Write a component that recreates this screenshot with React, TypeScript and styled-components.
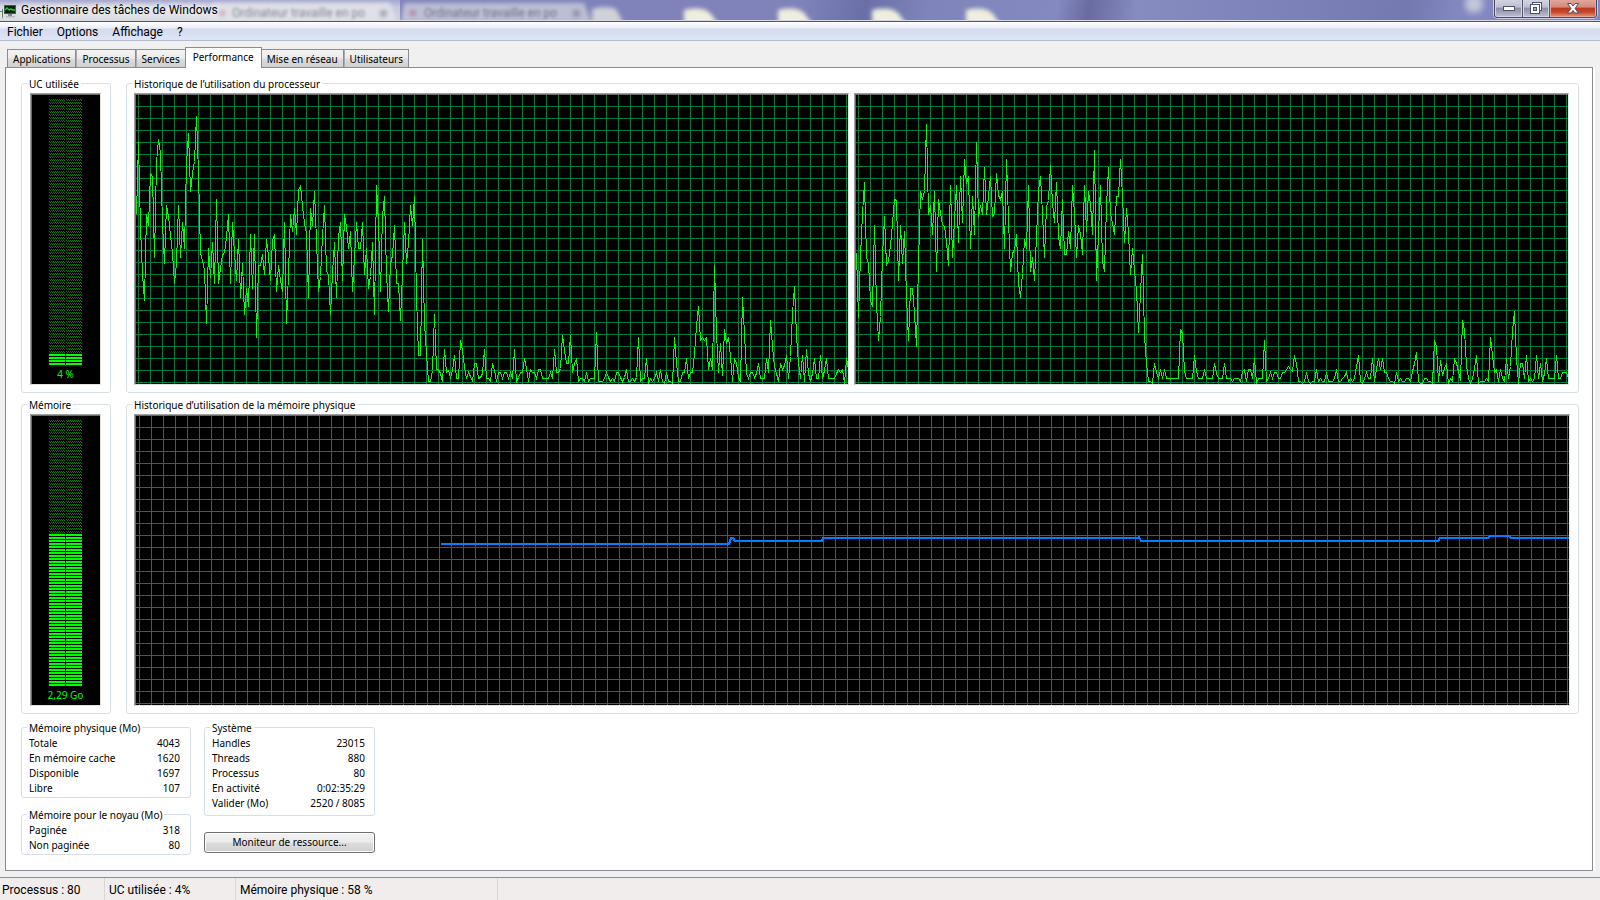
import React from "react";
import styled, { createGlobalStyle, css } from "styled-components";

const bodyFont = `"Noto Sans", Tahoma, sans-serif`;
const chromeFont = `Roboto, "Segoe UI", sans-serif`;

const GlobalStyle = createGlobalStyle`
  *, *::before, *::after { box-sizing: border-box; }
  body { margin: 0; background: #f0f0f0; color: #000; }
  button { color: inherit; font: inherit; }
`;

/* ---------- window frame ---------- */

const Window = styled.main`
  display: flex;
  flex-direction: column;
  min-height: 100vh;
  font: 10px/13px ${bodyFont};
`;

const TitleBar = styled.header`
  position: relative;
  display: flex;
  align-items: flex-start;
  justify-content: space-between;
  height: 22px;
  overflow: hidden;
  border-bottom: 1px solid #55566a;
  background: linear-gradient(100deg, #7f83ba 50%, #6a6fa8 54%, #7f84ba 58%, #8489c0 66%, #686ca0 68%, #868bc0 71%, #7d82b8 80%, #7479b0 88%, #8388c1 91%, #8388c2 100%);
`;

const Glass = styled.svg`
  position: absolute;
  inset: 0;
  width: 100%;
  height: 21px;
`;

const BackdropText = styled.text`
  font: 12px ${chromeFont};
`;

const Caption = styled.div`
  position: relative;
  display: flex;
  align-items: center;
  gap: 4px;
  height: 21px;
`;

const Title = styled.h1`
  margin: 0;
  font: 12px/21px ${chromeFont};
  text-shadow: 0 0 6px #fff, 0 0 10px #fff;
`;

const CaptionButtons = styled.div`
  position: relative;
  display: flex;
  height: 18px;
  margin-right: 3px;
  border: 1px solid #4a4a60;
  border-top: 0;
  border-radius: 0 0 4px 4px;
  box-shadow: 0 0 0 1px #c9cbe2;
  overflow: hidden;
`;

const CaptionButton = styled.button<{ $w: number; $close?: boolean }>`
  display: flex;
  align-items: center;
  justify-content: center;
  width: ${(p) => p.$w}px;
  height: 17px;
  padding: 0;
  border: 1px solid #d4d5e4;
  border-top: 0;
  background: ${(p) =>
    p.$close
      ? "linear-gradient(#e0a79c 0, #d6887b 45%, #bb3a22 50%, #c9452a 75%, #dd8a68 100%)"
      : "linear-gradient(#d3d4e2 0, #bcbdd0 45%, #8c8dac 50%, #a1a1bb 75%, #bcbcca 100%)"};
  & + & { box-shadow: -1px 0 0 #55566a; margin-left: 1px; }
  ${(p) => p.$close && css`border-color: #dfa69b;`}
`;

const MenuBar = styled.nav`
  display: flex;
  height: 19px;
  border-bottom: 1px solid #b4bdd0;
  background: linear-gradient(#fff 0, #e9edf6 6px, #d4dbed 7px, #dfe5f7 18px);
  font: 12px/16px ${chromeFont};
`;

const MenuItem = styled.button`
  height: 18px;
  padding: 2px 7px 0;
  border: 0;
  background: none;
`;

/* ---------- tabs ---------- */

const Body = styled.div`
  display: flex;
  flex: 1;
  flex-direction: column;
  padding: 6px 7px 6px 5px;
`;

const TabStrip = styled.div`
  display: flex;
  align-items: flex-end;
  height: 20px;
  padding-left: 2px;
`;

const Tab = styled.button<{ $on?: boolean }>`
  position: relative;
  height: 18px;
  padding: 0 5px;
  border: 1px solid #898c95;
  border-bottom: 0;
  background: linear-gradient(#f3f3f3 0, #ebebeb 48%, #dddddd 52%, #cfcfcf 100%);
  line-height: 18px;
  white-space: nowrap;
  & + & { border-left-color: #a9abb2; }
  ${(p) =>
    p.$on &&
    css`
      z-index: 1;
      height: 21px;
      margin: 0 -1px -1px;
      padding: 0 7px 3px;
      background: #fff;
      && { border-left-color: #898c95; }
    `}
`;

const Panel = styled.section`
  display: flex;
  flex: 1;
  flex-direction: column;
  padding: 9px 13px 15px 15px;
  border: 1px solid #898c95;
  background: #fff;
  box-shadow: 2px 0 0 #fff;
`;

/* ---------- group boxes ---------- */

const Group = styled.fieldset<{ $pad: string }>`
  display: flex;
  flex-direction: column;
  min-width: 0;
  margin: 0;
  padding: ${(p) => p.$pad};
  border: 1px solid #d5dfe5;
  border-radius: 3px;
`;

const Legend = styled.legend<{ $in?: number }>`
  height: 13px;
  margin-left: ${(p) => p.$in ?? -2}px;
  padding: 0 2px;
  line-height: 15px;
`;

const MonitorRow = styled.div`
  display: grid;
  grid-template-columns: 90px minmax(0, 1fr);
  flex: 1 1 0px;
  gap: 15px;
  min-height: 200px;
  & + & { margin-top: 5px; }
`;

const Screen = styled.div`
  border: 1px solid;
  border-color: #a0a0a0 #e3e3e3 #e3e3e3 #a0a0a0;
  background: #000;
  box-shadow: inset 1px 1px 0 #696969;
  padding: 1px 0 0 1px;
  min-width: 0;
  overflow: hidden;
`;

const MeterScreen = styled(Screen)`
  display: flex;
  flex: 1;
  flex-direction: column;
  align-items: center;
  padding-top: 5px;
  padding-right: 1px;
  color: #00ff00;
  line-height: 19px;
`;

const Segments = styled.div`
  display: flex;
  flex: 1;
  gap: 1px;
`;

const SegmentColumn = styled.div`
  display: flex;
  flex-direction: column;
  width: 16px;
`;

const DimPart = styled.svg`
  flex: 1 1 0;
  width: 16px;
  min-height: 0;
`;

const LitPart = styled.div<{ $count: number }>`
  height: ${(p) => p.$count * 3 - 1}px;
  background: repeating-linear-gradient(#00ff00 0 2px, #000 2px 3px);
`;

const GraphRow = styled.div<{ $cols: number }>`
  display: grid;
  grid-template-columns: repeat(${(p) => p.$cols}, minmax(0, 1fr));
  flex: 1;
  gap: 5px;
  padding-right: ${(p) => p.$cols - 1}px;
`;

const Plot = styled.svg<{ $start: number }>`
  display: block;
  width: 100%;
  height: 100%;
  background-image: linear-gradient(to right, #008040 1px, transparent 1px),
    linear-gradient(#008040 1px, transparent 1px);
  background-size: 12px 12px;
  background-position: ${(p) => p.$start}px 11px;
`;

const PlotFrame = styled(Screen)`
  position: relative;
  display: grid;
`;

const PlotHolder = styled.div`
  position: absolute;
  inset: 1px 0 0 1px;
  overflow: hidden;
`;

/* ---------- figures ---------- */

const Figures = styled.div`
  display: grid;
  grid-template-columns: 170px 171px;
  gap: 13px;
  margin-top: 7px;
`;

const FigureColumn = styled.div<{ $gap: number }>`
  display: flex;
  flex-direction: column;
  gap: ${(p) => p.$gap}px;
`;

const FigureTable = styled.table`
  width: 100%;
  border-collapse: collapse;
  line-height: 15px;
  th, td { padding: 0; font-weight: normal; text-align: left; white-space: nowrap; }
  td { text-align: right; }
`;

const PushButton = styled.button`
  height: 21px;
  padding: 0;
  border: 1px solid #707070;
  border-radius: 3px;
  background: linear-gradient(#f2f2f2 0, #ebebeb 48%, #dddddd 52%, #cfcfcf 100%);
  box-shadow: inset 0 0 0 1px #fcfcfc;
`;

const StatusBar = styled.footer`
  display: flex;
  height: 23px;
  border-top: 1px solid #8d8e8a;
  background: #f1edec;
  font: 12px/24px ${chromeFont};
`;

const StatusCell = styled.span<{ $w: number }>`
  width: ${(p) => p.$w}px;
  padding-left: 4px;
  border-right: 1px solid #d7d7d7;
  white-space: nowrap;
  &:first-child { padding-left: 2px; }
`;

/* ---------- data ---------- */

type Run = { dx: number; dy: number; points: string };

// Samples are stored in thirds of a pixel; dx and dy shift a run to the plot's origin.
const cpu0: Run[] = [
  {
    dx: -18,
    dy: -15,
    points: `19,373 25,157 31,416 37,552 43,632 49,373 55,407 61,250 67,258 73,502 79,218 85,148 91,190 97,400 103,520
109,346 115,380 121,435 127,490 133,580 139,520 145,346 151,502 157,397 163,475 169,220 175,130 181,304 187,250 193,213
199,79 205,250 211,490 217,510 223,540 229,700 235,475 241,562 247,458 253,580 259,328 265,580 271,535 277,493 283,490
289,440 295,374 301,580 307,397 313,490 319,570 325,448 331,622 337,520 343,673 349,595 355,649 361,433 367,595 373,433
379,742 385,527 391,525 397,493 403,553 409,448 415,500 421,570 427,450 433,433 439,604 445,526 451,570 457,604 463,397
469,700 475,550 481,374 487,424 493,355 499,433 505,301 511,286 517,350 523,400 529,430 535,622 541,355 547,407 553,304
559,450 565,604 571,560 577,440 583,346 589,540 595,556 601,673 607,550 613,458 619,622 625,440 631,397 637,570 643,374
649,410 655,475 661,424 667,604 673,500 679,397 685,475 691,475 697,397 703,553 709,475 715,595 721,560 727,458 733,673
739,286 745,400 751,604 757,375 763,319 769,550 775,664 781,520 787,495 793,406 799,580 805,580 811,691 817,550 823,397
829,520 835,460 841,346 847,407 853,319 859,620 865,796 871,796 877,448 883,700 889,790 895,874 901,874`,
  },
  {
    dx: 882,
    dy: 435,
    points: `7,390 13,222 19,388 25,388 31,400 37,424 43,328 49,397 55,390 61,412 67,390 73,346 79,415 85,415 91,300 97,330
103,380 109,415 115,397 121,410 127,424 133,370 139,370 145,415 151,412 157,400 163,328 169,415 175,415 181,424 187,370
193,390 199,424 205,397 211,397 217,415 223,397 229,397 235,415 241,397 247,415 253,328 259,424 265,412 271,397 277,397
283,355 289,385 295,424 301,388 307,397 313,397 319,415 325,388 331,388 337,415 343,415 349,415 355,415 361,397 367,415
373,328 379,397 385,397 391,385 397,286 403,330 409,370 415,370 421,286 427,397 433,370 439,355 445,424 451,415 457,415
463,424 469,397 475,424 481,415 487,415 493,415 499,277 505,424 511,424 517,424 523,415 529,397 535,412 541,424 547,415
553,424 559,397 565,397 571,412 577,424 583,412 589,388 595,424 601,424 607,415 613,424 619,412 625,292 631,424 637,415
643,415 649,355 655,430 661,415 667,424 673,415 679,397 685,424 691,388 697,424 703,430 709,397 715,424 721,424 727,430
733,292 739,370 745,424 751,424 757,397 763,397 769,355 775,415 781,397 787,397 793,340 799,260 805,199 811,300 817,292
823,300 829,292 835,388 841,355 847,388 853,75 859,280 865,397 871,310 877,406 883,268 889,310 895,292 901,350 907,424
913,355 919,370 925,412 931,424 937,172 943,280 949,400 955,415 961,397 967,397 973,412 979,400 985,370 991,415 997,415
1003,415 1009,355 1015,397 1021,241 1027,320 1033,380 1039,400 1045,424 1051,370 1057,388 1063,375 1069,346 1075,415
1081,350 1087,220 1093,139 1099,290 1105,370 1111,415 1117,346 1123,424 1129,328 1135,400 1141,424 1147,400 1153,355
1159,415 1165,415 1171,346 1177,415 1183,390 1189,355 1195,415 1201,415 1207,415 1213,415 1219,400 1225,388 1231,397
1237,388 1243,430 1249,355 1255,388`,
  },
];

const cpu1: Run[] = [
  {
    dx: -18,
    dy: -15,
    points: `19,490 25,682 31,500 37,370 43,277 49,502 55,520 61,630 67,649 73,406 79,640 85,751 91,680 97,500 103,379
109,526 115,510 121,465 127,400 133,328 139,330 145,571 151,406 157,520 163,424 169,620 175,751 181,595 187,595 193,670
199,769 205,520 211,304 217,328 223,300 229,103 235,373 241,346 247,433 253,304 259,544 265,328 271,370 277,403 283,410
289,455 295,526 301,286 307,502 313,390 319,286 325,457 331,259 337,397 343,208 349,280 355,259 361,475 367,319 373,433
379,157 385,379 391,346 397,373 403,232 409,373 415,320 421,259 427,379 433,370 439,250 445,315 451,328 457,304 463,475
469,208 475,390 481,544 487,490 493,478 499,433 505,580 511,622 517,550 523,448 529,475 535,286 541,544 547,502 553,571
559,440 565,300 571,259 577,370 583,502 589,350 595,330 601,226 607,340 613,397 619,277 625,440 631,475 637,328 643,493
649,493 655,424 661,475 667,286 673,370 679,502 685,406 691,430 697,493 703,286 709,424 715,304 721,340 727,433 733,181
739,571 745,430 751,286 757,515 763,544 769,350 775,232 781,370 787,400 793,433 799,319 805,319 811,208 817,320 823,457
829,355 835,430 841,553 847,475 853,540 859,600 865,727 871,610 877,493 883,740 889,820 895,874 901,874 907,880 913,820
919,848`,
  },
  {
    dx: 852,
    dy: 615,
    points: `55,235 61,208 67,235 73,208 79,235 115,235 121,87 127,100 133,215 139,235 157,235 163,166 169,215 175,235
187,235 193,208 199,235 217,235 223,190 229,220 235,235 247,235 253,190 259,235 271,235 277,244 283,235 295,235 301,244
307,215 313,208 319,244 325,208 331,208 337,235 343,175 349,250 355,235 367,235 373,121 379,244 385,235 391,217 397,235
403,217 409,217 415,235 421,235 427,217 433,217 439,208 445,199 451,208 457,215 463,166 469,190 475,244 481,244 487,250
493,244 499,217 505,244 511,250 517,244 523,244 529,208 535,244 541,235 547,244 553,244 559,217 565,244 577,244 583,235
589,208 595,244 601,244 607,235 613,230 619,217 625,244 631,235 637,244 643,235 649,200 655,166 661,244 667,250 673,235
679,217 685,235 691,235 697,175 703,244 709,205 715,175 721,208 727,175 733,217 739,217 745,235 751,244 757,244 763,250
769,217 775,244 781,235 787,244 793,244 799,235 805,235 811,244 817,215 823,190 829,157 835,244 841,250 847,250 853,235
859,235 865,244 871,244 877,250 883,121 889,140 895,244 901,181 907,225 913,205 919,190 925,250 931,235 937,244 943,175
949,190 955,215 961,240 967,61 973,90 979,195 985,235 991,250 997,235 1003,205 1009,166 1015,250 1021,244 1033,244
1039,235 1045,244 1051,112 1057,165 1063,217 1069,208 1075,244 1081,208 1087,235 1093,244 1099,175 1105,235 1111,200
1117,95 1123,34 1129,175 1135,250 1141,190 1147,190 1153,235 1159,166 1165,244 1171,235 1177,244 1183,235 1189,166
1195,235 1201,190 1207,244 1213,220 1219,175 1225,235 1243,235 1249,166 1255,235 1261,235 1267,217 1279,217 1285,235`,
  },
];

const memoryTrace =
  "305,128 593,128 595,122 597,122 599,125 686,125 687,122 1002,122 1003,121 1005,125 1302,125 1304,122 1352,122 1354,120 1373,120 1375,122 1800,122";

function toPolyline(runs: Run[]) {
  return runs
    .flatMap((run) =>
      run.points.split(/\s+/).map((pair) => {
        const [x, y] = pair.split(",").map(Number);
        return `${Math.floor((x + run.dx) / 3) + 0.5},${Math.floor((y + run.dy) / 3) + 0.5}`;
      })
    )
    .join(" ");
}

const physical = [["Totale", "4043"], ["En mémoire cache", "1620"], ["Disponible", "1697"], ["Libre", "107"]];
const kernel = [["Paginée", "318"], ["Non paginée", "80"]];
const system = [["Handles", "23015"], ["Threads", "880"], ["Processus", "80"], ["En activité", "0:02:35:29"], ["Valider (Mo)", "2520 / 8085"]];

/* ---------- parts ---------- */

function Meter({ id, lit, label }: { id: string; lit: number; label: string }) {
  return (
    <MeterScreen>
      <Segments>
        {[0, 1].map((column) => (
          <SegmentColumn key={column}>
            <DimPart aria-hidden="true">
              <defs>
                <pattern id={`${id}${column}`} width="2" height="3" patternUnits="userSpaceOnUse">
                  <rect width="1" height="1" fill="#008000" />
                  <rect x="1" y="1" width="1" height="1" fill="#008000" />
                </pattern>
              </defs>
              <rect width="16" height="100%" fill={`url(#${id}${column})`} />
            </DimPart>
            <LitPart $count={lit} />
          </SegmentColumn>
        ))}
      </Segments>
      {label}
    </MeterScreen>
  );
}

function Graph({ start, points, color, width }: { start: number; points: string; color: string; width: number }) {
  return (
    <PlotFrame>
      <PlotHolder>
        <Plot $start={start} aria-hidden="true">
          <polyline points={points} fill="none" stroke={color} strokeWidth={width} shapeRendering="crispEdges" />
        </Plot>
      </PlotHolder>
    </PlotFrame>
  );
}

function Table({ rows }: { rows: string[][] }) {
  return (
    <FigureTable>
      <tbody>
        {rows.map(([name, value]) => (
          <tr key={name}>
            <th scope="row">{name}</th>
            <td>{value}</td>
          </tr>
        ))}
      </tbody>
    </FigureTable>
  );
}

function Backdrop() {
  return (
    <Glass aria-hidden="true">
      <defs>
        <filter id="soft" x="-20%" y="-80%" width="140%" height="260%">
          <feGaussianBlur stdDeviation="3" />
        </filter>
        <filter id="softer" x="-20%" y="-80%" width="140%" height="260%">
          <feGaussianBlur stdDeviation="2" />
        </filter>
        <filter id="softText" x="-5%" y="-50%" width="110%" height="200%">
          <feGaussianBlur stdDeviation="1.6" />
        </filter>
        <linearGradient id="strip" x1="0" y1="0" x2="0" y2="1">
          <stop offset="0" stopColor="#a3a7cf" />
          <stop offset="0.35" stopColor="#c6c8dc" />
          <stop offset="1" stopColor="#d3d4df" />
        </linearGradient>
      </defs>
      <rect width="400" height="21" fill="url(#strip)" />
      <g filter="url(#softer)">
        <rect x="-10" y="5" width="216" height="20" fill="#dcdde3" />
        <path d="M205 24 L212 3 H390 L398 24 Z" fill="#dfe0e8" />
        <path d="M400 24 L404 3 H584 L592 24 Z" fill="#bcbfd4" />
        <circle cx="222" cy="13" r="3" fill="#d09aa2" />
        <circle cx="413" cy="13" r="3" fill="#b5788c" />
        <rect x="380" y="10" width="7" height="7" fill="#a3a4b0" />
        <rect x="573" y="10" width="7" height="7" fill="#8e90a6" />
        <path d="M592 24 V9 Q606 5 616 9 L624 24 Z" fill="#cfd2d6" />
      </g>
      <g filter="url(#softText)">
        <BackdropText x="232" y="17" fill="#85868f">Ordinateur travaille en po</BackdropText>
        <BackdropText x="424" y="17" fill="#6f7184">Ordinateur travaille en po</BackdropText>
      </g>
      <g filter="url(#softer)">
        {[684, 778, 872, 966].map((x) => (
          <path key={x} d={`M${x} 26 V10 Q${x + 18} 6 ${x + 26} 13 L${x + 36} 26 Z`} fill="#efefdf" />
        ))}
      </g>
      <svg x="100%" overflow="visible">
        <circle cx="-126" cy="4" r="9" fill="#c6c8da" filter="url(#soft)" />
      </svg>
      <rect y="20" width="100%" height="1" fill="#d5d6e6" />
    </Glass>
  );
}

function AppIcon() {
  return (
    <svg width="17" height="16" viewBox="0 0 17 16" aria-hidden="true">
      <path d="M0 6h2v9H0z" fill="#dfe6dc" />
      <path d="M0 8.5h2M2.5 6v9" stroke="#5f8a5a" />
      <path d="M4 2h12v9H4z" fill="#4b5552" />
      <path d="M5 3h10v7H5z" fill="#06200c" />
      <path d="M5 7l2-2 2 2 2-1 2 1h2" fill="none" stroke="#18d235" strokeWidth="1.4" />
      <path d="M8 11h4v2H8z" fill="#83898c" />
      <path d="M6 13h9v1.500H6z" fill="#b5bbbf" />
    </svg>
  );
}

export default function App() {
  return (
    <>
      <GlobalStyle />
      <Window>
        <TitleBar>
          <Backdrop />
          <Caption>
            <AppIcon />
            <Title>Gestionnaire des tâches de Windows</Title>
          </Caption>
          <CaptionButtons>
            <CaptionButton $w={27} aria-label="Réduire">
              <svg width="12" height="6" viewBox="0 0 12 6">
                <rect x="0.500" y="1.500" width="11" height="4" fill="#fff" stroke="#50526a" />
              </svg>
            </CaptionButton>
            <CaptionButton $w={26} aria-label="Restaurer">
              <svg width="12" height="12" viewBox="0 0 12 12">
                <rect x="2.500" y="0.500" width="9" height="8" fill="#fff" stroke="#50526a" />
                <rect x="0.500" y="2.500" width="9" height="9" fill="#fff" stroke="#50526a" />
                <rect x="3.500" y="5.500" width="3" height="3" fill="#a6a8bc" stroke="#50526a" />
              </svg>
            </CaptionButton>
            <CaptionButton $w={46} $close aria-label="Fermer">
              <svg width="12" height="11" viewBox="0 0 12 11">
                <path d="M0.500 0.500h3.500L6 3l2-2.500h3.500L8 5.500l3.500 4.500H8L6 7.500 4 10H0.500L4 5.500z" fill="#fff" stroke="#5a4a5e" />
              </svg>
            </CaptionButton>
          </CaptionButtons>
        </TitleBar>

        <MenuBar aria-label="Menu">
          <MenuItem>Fichier</MenuItem>
          <MenuItem>Options</MenuItem>
          <MenuItem>Affichage</MenuItem>
          <MenuItem>?</MenuItem>
        </MenuBar>

        <Body>
          <TabStrip role="tablist">
            {["Applications", "Processus", "Services", "Performance", "Mise en réseau", "Utilisateurs"].map((name) => (
              <Tab key={name} role="tab" aria-selected={name === "Performance"} $on={name === "Performance"}>
                {name}
              </Tab>
            ))}
          </TabStrip>

          <Panel role="tabpanel" aria-label="Performance">
            <MonitorRow>
              <Group $pad="3px 9px 7px 8px">
                <Legend $in={-3}>UC utilisée</Legend>
                <Meter id="cpuDim" lit={4} label="4 %" />
              </Group>
              <Group $pad="3px 8px 7px 7px">
                <Legend>Historique de l’utilisation du processeur</Legend>
                <GraphRow $cols={2}>
                  <Graph start={2} points={toPolyline(cpu0)} color="#00ff00" width={1} />
                  <Graph start={2} points={toPolyline(cpu1)} color="#00ff00" width={1} />
                </GraphRow>
              </Group>
            </MonitorRow>

            <MonitorRow>
              <Group $pad="3px 9px 7px 8px">
                <Legend $in={-3}>Mémoire</Legend>
                <Meter id="memDim" lit={51} label="2,29 Go" />
              </Group>
              <Group $pad="3px 8px 7px 7px">
                <Legend>Historique d’utilisation de la mémoire physique</Legend>
                <GraphRow $cols={1}>
                  <Graph start={3} points={memoryTrace} color="#0080ff" width={2} />
                </GraphRow>
              </Group>
            </MonitorRow>

            <Figures>
              <FigureColumn $gap={10}>
                <Group $pad="2px 10px 1px 7px">
                  <Legend>Mémoire physique (Mo)</Legend>
                  <Table rows={physical} />
                </Group>
                <Group $pad="2px 10px 1px 7px">
                  <Legend>Mémoire pour le noyau (Mo)</Legend>
                  <Table rows={kernel} />
                </Group>
              </FigureColumn>
              <FigureColumn $gap={16}>
                <Group $pad="2px 9px 4px 7px">
                  <Legend>Système</Legend>
                  <Table rows={system} />
                </Group>
                <PushButton>Moniteur de ressource...</PushButton>
              </FigureColumn>
            </Figures>
          </Panel>
        </Body>

        <StatusBar>
          <StatusCell $w={105}>Processus : 80</StatusCell>
          <StatusCell $w={131}>UC utilisée : 4%</StatusCell>
          <StatusCell $w={262}>Mémoire physique : 58 %</StatusCell>
        </StatusBar>
      </Window>
    </>
  );
}
